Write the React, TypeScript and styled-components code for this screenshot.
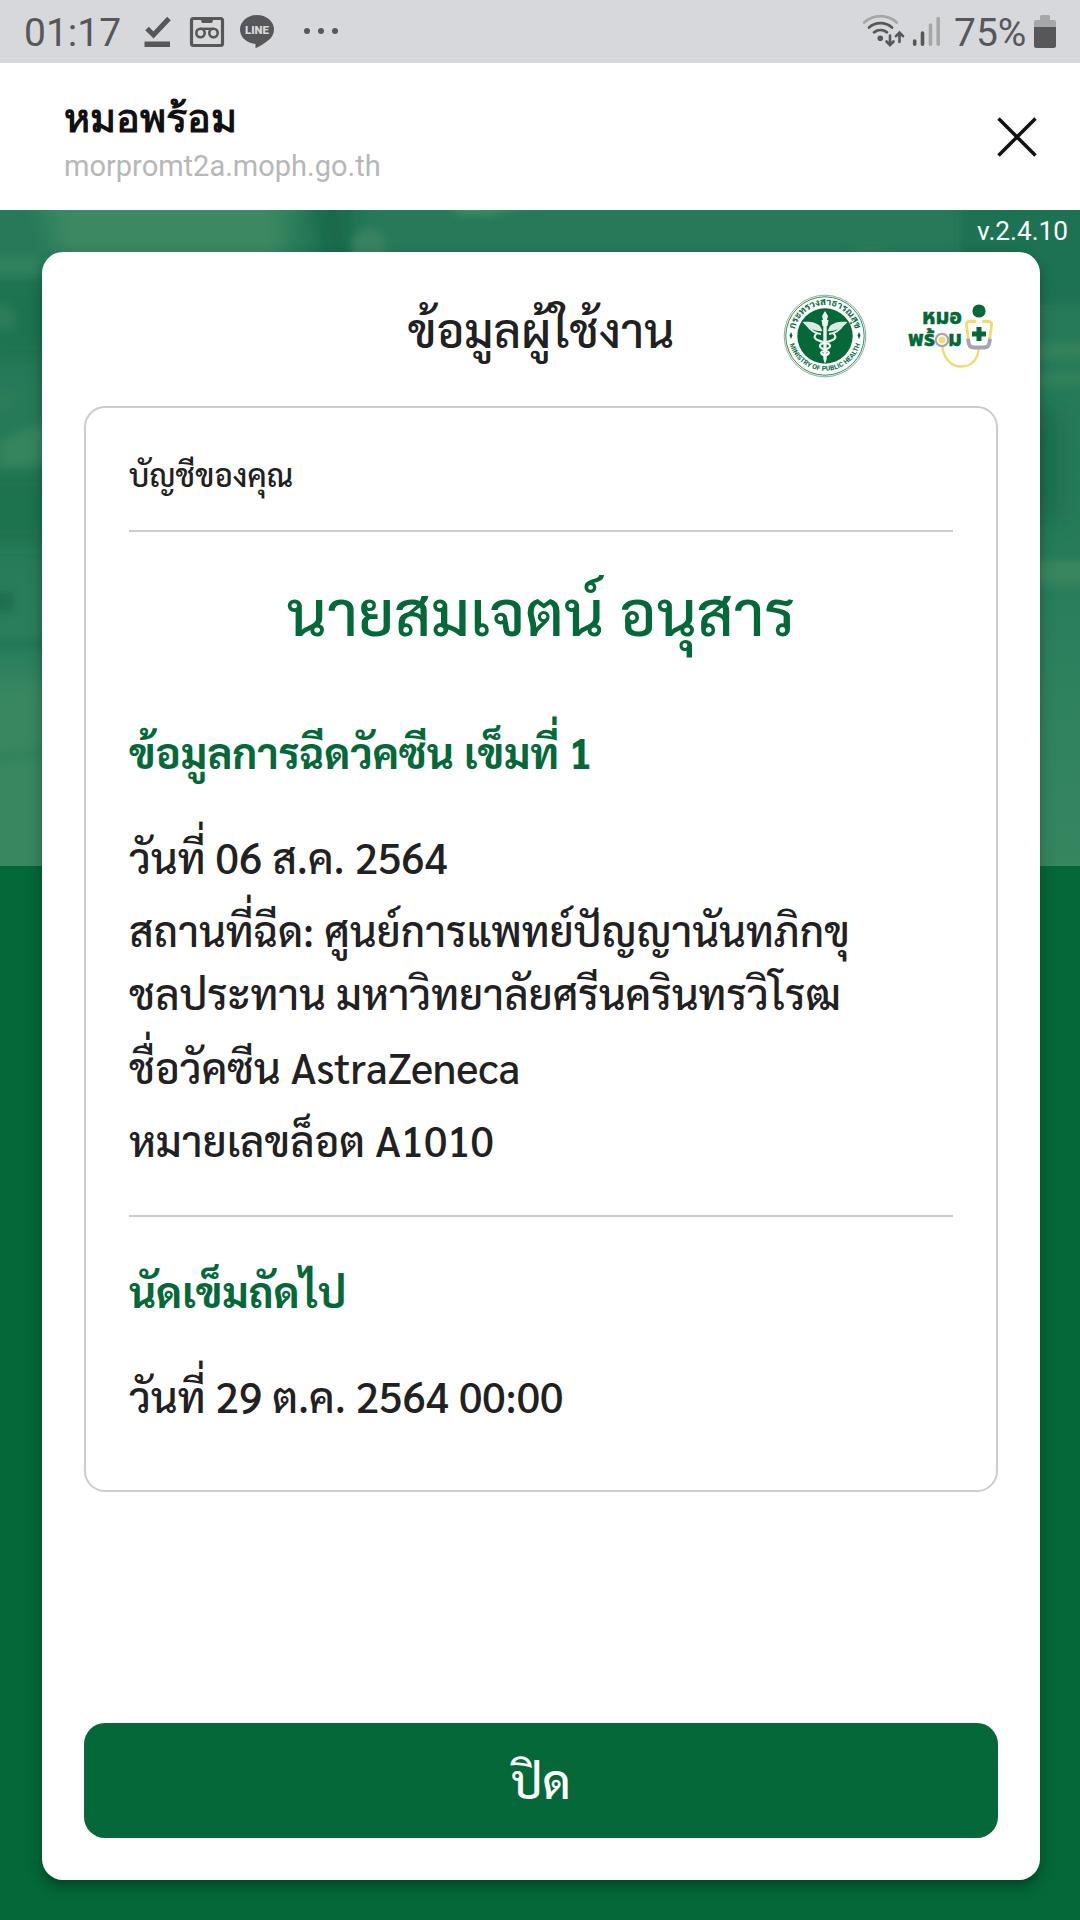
import React from "react";
import styled, { createGlobalStyle } from "styled-components";

const GREEN = "#056839";
const SARABUN = `Sarabun, "Noto Sans Thai Looped", "Noto Sans", sans-serif`;

const Global = createGlobalStyle`
  * { box-sizing: border-box; }
  body { margin: 0; background: ${GREEN}; }
`;

const Screen = styled.div`
  width: 1080px;
  height: 1920px;
  display: flex;
  flex-direction: column;
  overflow: hidden;
  font-family: ${SARABUN};
  color: #212121;
`;

const StatusBar = styled.div`
  flex: none;
  height: 63px;
  display: flex;
  align-items: center;
  padding: 0 24px 0 24px;
  background: #d7d8dc;
  color: #575759;
  font: 400 39px/63px Roboto, sans-serif;
`;
const StatusText = styled.span<{ $w: number }>`
  width: ${(p) => p.$w}px;
  white-space: nowrap;
  padding-top: 4px;
`;
const Spacer = styled.span`
  flex: 1;
`;
const StatusSvg = styled.svg`
  flex: none;
  display: block;
`;

const Header = styled.header`
  flex: none;
  height: 147px;
  display: flex;
  justify-content: space-between;
  align-items: center;
  padding: 0 43px 0 64px;
  background: #fff;
`;
const HeaderTexts = styled.div`
  display: flex;
  flex-direction: column;
  gap: 3px;
`;
const SiteName = styled.div`
  padding-top: 4px;
  font: 700 39.6px/52px "Noto Sans", sans-serif;
  color: #111;
`;
const SiteUrl = styled.div`
  font: 400 29px/40px Roboto, sans-serif;
  color: #b7b7b7;
`;

const Body = styled.main`
  flex: 1;
  position: relative;
  display: flex;
  flex-direction: column;
  padding: 0 40px 40px 42px;
  background: ${GREEN};
`;
const Backdrop = styled.svg`
  position: absolute;
  left: 0;
  top: 0;
`;
const Version = styled.div`
  position: relative;
  height: 42px;
  margin-right: -28px;
  text-align: right;
  color: #fff;
  font: 400 26.2px/42px Roboto, sans-serif;
`;
const Card = styled.section`
  position: relative;
  flex: 1;
  display: flex;
  flex-direction: column;
  padding: 0 42px 42px;
  border-radius: 21px;
  background: #fff;
  box-shadow: 0 8px 10px -3px rgba(0, 0, 0, 0.2), 0 8px 18px rgba(0, 0, 0, 0.1), 0 3px 14px rgba(0, 0, 0, 0.12);
`;
const CardHead = styled.div`
  height: 154px;
  display: grid;
  grid-template-columns: 1fr auto 1fr;
  align-items: center;
`;
const Title = styled.h1`
  grid-column: 2;
  margin: 0;
  font-size: 47.2px;
  line-height: 70px;
  font-weight: 500;
`;
const Logos = styled.div`
  display: flex;
  justify-content: flex-end;
  gap: 41px;
  padding: 14px 4px 0 0;
`;

const Info = styled.div`
  height: 1086px;
  padding: 0 43px;
  border: 2px solid #cacccd;
  border-radius: 21px;
`;
const Account = styled.div`
  height: 124px;
  padding-top: 42px;
  border-bottom: 2px solid #cacccd;
  font-size: 31.45px;
  line-height: 47px;
  font-weight: 500;
`;
const Name = styled.h2`
  margin: 31px 0 0;
  text-align: center;
  color: ${GREEN};
  font-size: 62.9px;
  line-height: 94px;
  font-weight: 500;
`;
const Group = styled.div<{ $top: number }>`
  padding-top: ${(p) => p.$top}px;
`;
const SectionTitle = styled.h3`
  margin: 0 0 42px;
  color: ${GREEN};
  font-size: 41.94px;
  line-height: 62.9px;
  font-weight: 700;
`;
const Line = styled.p`
  margin: 0 0 10.5px;
  font-size: 41.94px;
  line-height: 62.9px;
  font-weight: 500;
`;
const Divider = styled.hr`
  margin: 43px 0 0;
  border: 0;
  height: 2px;
  background: #cacccd;
`;
const CloseButton = styled.button`
  margin-top: auto;
  height: 115px;
  padding: 0 0 2px;
  border: 0;
  border-radius: 21px;
  background: ${GREEN};
  color: #fff;
  font: 500 47.2px/70px ${SARABUN};
`;

function LeftStatusIcons() {
  return (
    <StatusSvg width="200" height="63" viewBox="0 0 200 63" fill="none">
      <path d="M3 28.5 9.5 35 25 18.5" stroke="#575759" strokeWidth="5" />
      <path d="M0.5 41.5h25.5v5.5H.5z" fill="#575759" />
      <rect x="47.5" y="18.5" width="31" height="27" rx="2" stroke="#575759" strokeWidth="3.2" />
      <path d="M56 18h14l-2 5H58z" fill="#575759" />
      <circle cx="56.5" cy="33" r="4.2" stroke="#575759" strokeWidth="2.6" />
      <circle cx="69.5" cy="33" r="4.2" stroke="#575759" strokeWidth="2.6" />
      <path d="M56.5 28.8h13" stroke="#575759" strokeWidth="2.4" />
      <ellipse cx="113" cy="29.5" rx="17" ry="14.5" fill="#575759" />
      <path d="M111.5 42v6.2c7-3 13-8 16-12z" fill="#575759" />
      <text x="113" y="34" textAnchor="middle" fontFamily="Roboto, sans-serif" fontWeight="900" fontSize="11.4" fill="#d7d8dc">LINE</text>
      <circle cx="163" cy="31" r="3" fill="#575759" />
      <circle cx="177" cy="31" r="3" fill="#575759" />
      <circle cx="191" cy="31" r="3" fill="#575759" />
    </StatusSvg>
  );
}

function SignalIcons() {
  return (
    <StatusSvg width="92" height="63" viewBox="0 0 92 63" fill="none" strokeLinecap="round">
      <path d="M2.2 22.5a24 24 0 0 1 32.6 0" stroke="#a6a7a9" strokeWidth="2.7" />
      <path d="M7 27.5a17.5 17.5 0 0 1 23 0" stroke="#575759" strokeWidth="2.7" />
      <path d="M12 32.3a11 11 0 0 1 13 0" stroke="#575759" strokeWidth="2.7" />
      <circle cx="18.3" cy="38.2" r="2.8" fill="#575759" />
      <path d="M28 35.5v9M24.5 41.5l3.5 3.6 3.5-3.6M37.5 42v-9M34 36.2l3.5-3.6 3.5 3.6" stroke="#575759" strokeWidth="2.6" />
      <path d="M52.7 41v3.3M60.5 33v11.3" stroke="#575759" strokeWidth="3.6" />
      <path d="M68.5 25v19.3M76.2 18.5v25.8" stroke="#a6a7a9" strokeWidth="3.6" />
    </StatusSvg>
  );
}

function BatteryIcon() {
  return (
    <StatusSvg width="22" height="34" viewBox="0 0 22 34">
      <path d="M6 1.5q0-1.5 1.5-1.5h7q1.5 0 1.5 1.5V5h4q2 0 2 2v5H0V7q0-2 2-2h4z" fill="#a6a7a9" />
      <path d="M0 12h22v18.5q0 2.5-2.5 2.5h-17Q0 33 0 30.5z" fill="#575759" />
    </StatusSvg>
  );
}

function MinistryLogo() {
  return (
    <svg width="84" height="84" viewBox="0 0 84 84">
      <defs>
        <path id="arcTop" d="M12.4 50a30.7 30.7 0 1 1 59.2 0" />
        <path id="arcBottom" d="M5.2 40a36.8 36.8 0 0 0 73.6 0" />
      </defs>
      <circle cx="42" cy="42" r="40.8" fill="#fff" stroke={GREEN} strokeWidth="0.5" />
      <circle cx="42" cy="42" r="39.2" fill="none" stroke={GREEN} strokeWidth="0.8" />
      <circle cx="42" cy="42" r="27.7" fill={GREEN} />
      <g fill={GREEN} fontWeight="700" textAnchor="middle">
        <text fontFamily={SARABUN} fontSize="9.6">
          <textPath href="#arcTop" startOffset="50%">กระทรวงสาธารณสุข</textPath>
        </text>
        <text fontFamily="Roboto, sans-serif" fontSize="6.7" letterSpacing="0.1">
          <textPath href="#arcBottom" startOffset="50%">MINISTRY OF PUBLIC HEALTH</textPath>
        </text>
      </g>
      <path d="M8 38l1.500 3.500L8 45l-1.500-3.500zM76 38l1.500 3.500L76 45l-1.500-3.500z" fill={GREEN} />
      <path d="M42 17l3 5-1 4h-4l-1-4zM38.500 26h7l-1 6h-5zM40.300 31h3.400v34L42 70l-1.700-5z" fill="#eef5f0" />
      <path d="M39.500 37c-3 1-14-1-20-9 6-1 14 0 17.500 4zM44.500 37c3 1 14-1 20-9-6-1-14 0-17.500 4z" fill="#dcebe2" />
      <path d="M24 31c3 5 9 9 14 9M60 31c-3 5-9 9-14 9" fill="none" stroke="#dcebe2" strokeWidth="2" />
      <path d="M34 39c-7 6 3 8 8 9.500s8 4 1 7-6 4 0 7M50 39c7 6-3 8-8 9.500s-8 4-1 7 6 4 0 7" fill="none" stroke="#eef5f0" strokeWidth="2.200" />
    </svg>
  );
}

function MorPromLogo() {
  return (
    <svg width="86" height="84" viewBox="0 0 86 84">
      <g fill={GREEN} fontFamily="'Noto Sans Thai', 'Noto Sans', sans-serif" fontWeight="800" stroke={GREEN} strokeWidth="0.4">
        <text x="14" y="30" fontSize="22" textLength="40" lengthAdjust="spacingAndGlyphs">หมอ</text>
        <text x="0" y="52" fontSize="22" textLength="27" lengthAdjust="spacingAndGlyphs">พร้</text>
        <text x="40" y="52" fontSize="22" textLength="14" lengthAdjust="spacingAndGlyphs">ม</text>
      </g>
      <circle cx="71" cy="17" r="6.6" fill={GREEN} />
      <path d="M34 47c0 16 8 25.500 19 25.500s17.500-8 17.500-18" fill="none" stroke="#f1dc6c" strokeWidth="2.4" />
      <circle cx="34" cy="46" r="6.2" fill="#fff" stroke="#a3a8b0" strokeWidth="2.2" />
      <circle cx="34" cy="46" r="3.6" fill="#f1dc6c" />
      <path d="M68 27.500h-6q-4 0-3.600 3l1.800 14M74 27.500h6q4 0 3.600 3l-1.800 14" fill="none" stroke="#f1dc6c" strokeWidth="2.8" />
      <path d="M59.900 44.500l1 5.500q1 3.500 4.500 3.500h11.200q3.500 0 4.500-3.500l1-5.500" fill="none" stroke="#a3a8b0" strokeWidth="3.800" />
      <path d="M68.500 33h5v4.500H78v5h-4.500V47h-5v-4.500H64v-5h4.500z" fill={GREEN} />
    </svg>
  );
}

function PhotoBackdrop() {
  return (
    <Backdrop width="1080" height="656" viewBox="0 0 1080 656">
      <defs>
        <linearGradient id="photo" x1="0" y1="0" x2="0" y2="1">
          <stop offset="0" stopColor="#277959" />
          <stop offset="0.5" stopColor="#267b58" />
          <stop offset="0.75" stopColor="#2f825e" />
          <stop offset="1" stopColor="#368660" />
        </linearGradient>
        <filter id="soft" x="-10%" y="-10%" width="120%" height="120%">
          <feGaussianBlur stdDeviation="4" />
        </filter>
        <filter id="wide" x="-10%" y="-10%" width="120%" height="120%">
          <feGaussianBlur stdDeviation="11" />
        </filter>
      </defs>
      <rect width="1080" height="656" fill="url(#photo)" />
      <g filter="url(#wide)">
        <path d="M30-60h260l-6 160H70z" fill="#3a8862" />
        <path d="M302-60h50v140h-24z" fill="#14694a" />
        <path d="M-20 65h90v85h-90z" fill="#1c7350" />
        <path d="M-40 262h120v72h-120z" fill="#1a734d" />
        <path d="M-40 470h120v220h-120z" fill="#388761" />
        <rect x="1020" y="200" width="42" height="110" fill="#1a6e4f" />
      </g>
      <g filter="url(#soft)">
        <path d="M353 80V30q16-24 32 0v50z" fill="#37835f" />
        <path d="M440-14h110l-60 20h-30z" fill="#3b8a60" />
        <path d="M960-20h140v114h-140z" fill="#1e7253" />
        <path d="M845 42q30-6 50 0z" fill="#3b8a60" />
        <rect x="-10" y="46" width="52" height="20" fill="#2f825c" />
        <path d="M-10 96q30-10 25 24h-25zM-10 182h25q5 20-25 22z" fill="#2b7d59" />
        <path d="M0 232q30-18 70-22v42l-70 6z" fill="#36855f" />
        <rect x="-10" y="382" width="24" height="20" fill="#1c7050" />
        <rect x="-10" y="428" width="70" height="12" fill="#227856" />
        <path d="M-10 546l70-8v4l-70 8z" fill="#2a7d58" />
        <path d="M1030 134l70-4v18l-70 2zM1030 162h70v14h-70z" fill="#31825c" />
        <rect x="1030" y="351" width="70" height="24" fill="#38865f" />
      </g>
    </Backdrop>
  );
}

export default function App() {
  return (
    <Screen>
      <Global />
      <StatusBar>
        <StatusText $w={120}>01:17</StatusText>
        <LeftStatusIcons />
        <Spacer />
        <SignalIcons />
        <StatusText $w={80}>75%</StatusText>
        <BatteryIcon />
      </StatusBar>
      <Header>
        <HeaderTexts>
          <SiteName>หมอพร้อม</SiteName>
          <SiteUrl>morpromt2a.moph.go.th</SiteUrl>
        </HeaderTexts>
        <svg width="40" height="40" viewBox="0 0 40 40" stroke="#111" strokeWidth="3.5">
          <path d="M1.5 1.5 38.5 38.5M38.5 1.5 1.5 38.5" />
        </svg>
      </Header>
      <Body>
        <PhotoBackdrop />
        <Version>v.2.4.10</Version>
        <Card>
          <CardHead>
            <Title>ข้อมูลผู้ใช้งาน</Title>
            <Logos>
              <MinistryLogo />
              <MorPromLogo />
            </Logos>
          </CardHead>
          <Info>
            <Account>บัญชีของคุณ</Account>
            <Name>นายสมเจตน์ อนุสาร</Name>
            <Group $top={64}>
              <SectionTitle>ข้อมูลการฉีดวัคซีน เข็มที่ 1</SectionTitle>
              <Line>วันที่ 06 ส.ค. 2564</Line>
              <Line>
                สถานที่ฉีด: ศูนย์การแพทย์ปัญญานันทภิกขุ
                <br />
                ชลประทาน มหาวิทยาลัยศรีนครินทรวิโรฒ
              </Line>
              <Line>ชื่อวัคซีน AstraZeneca</Line>
              <Line>หมายเลขล็อต A1010</Line>
            </Group>
            <Divider />
            <Group $top={43}>
              <SectionTitle>นัดเข็มถัดไป</SectionTitle>
              <Line>วันที่ 29 ต.ค. 2564 00:00</Line>
            </Group>
          </Info>
          <CloseButton>ปิด</CloseButton>
        </Card>
      </Body>
    </Screen>
  );
}
